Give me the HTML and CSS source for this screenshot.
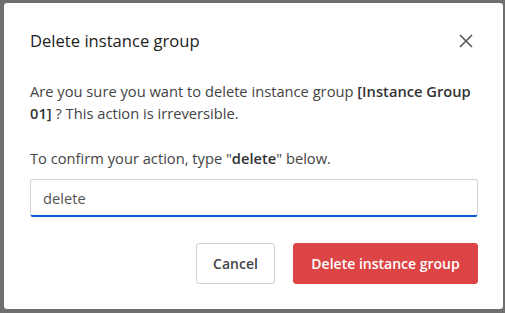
FILE: index.html
```html
<!DOCTYPE html>
<html lang="en">

<head>
  <meta charset="UTF-8">
  <meta name="viewport" content="width=device-width, initial-scale=1.0">
  <title>Delete instance group</title>
  <link rel="stylesheet" href="styles.css">
</head>

<body>
  <div class="modal">
    <div class="modal-header">
      <h2 class="title">Delete instance group</h2>
      <span class="close">
        <svg width="16" height="16" viewBox="0 0 16 16">
          <path d="M2 2 L14 14 M14 2 L2 14" stroke="#555" stroke-width="1.6" fill="none" />
        </svg>
      </span>
    </div>
    <div class="modal-body">
      <p class="warn">Are you sure you want to delete instance group <b>[Instance Group</b> <b>01]</b> ? This action is irreversible.</p>
      <p class="hint">To confirm your action, type "<b>delete</b>" below.</p>
      <input class="confirm" type="text" value="delete">
    </div>
    <div class="modal-footer">
      <button class="btn btn-cancel">Cancel</button>
      <button class="btn btn-danger">Delete instance group</button>
    </div>
  </div>
</body>

</html>
```

FILE: styles.css
```css
* {
  margin: 0;
  padding: 0;
  box-sizing: border-box;
}

body {
  background-color: #6f6f6f;
  padding: 3px 2px 4px 4px;
  font-family: "Open Sans", "Liberation Sans", sans-serif;
  color: #333;
}

.modal {
  width: 499px;
  height: 306px;
  background-color: #fff;
  border-radius: 3px;
  padding: 26px 25px 25px 26px;
  display: flex;
  flex-direction: column;
}

.modal-header {
  display: flex;
  justify-content: space-between;
  align-items: center;
  height: 24px;
}

.title {
  font-size: 16.6px;
  font-weight: 400;
  line-height: 24px;
  color: #222;
}

.close {
  display: flex;
  margin-right: 4px;
}

.modal-body {
  padding-top: 27px;
}

.modal-body p {
  font-size: 14.7px;
  line-height: 22px;
  color: #444;
}

.modal-body b {
  font-weight: 600;
  color: #333;
}

.hint {
  margin-top: 23px;
}

.confirm {
  display: block;
  width: 100%;
  height: 38px;
  margin-top: 10px;
  border: 1px solid #d4d4d4;
  border-bottom: 2px solid #0b5bd3;
  border-radius: 3px;
  padding: 0 12px;
  font-family: inherit;
  font-size: 14.7px;
  color: #555;
  outline: none;
}

.modal-footer {
  display: flex;
  justify-content: flex-end;
  gap: 18px;
  margin-top: 26px;
}

.btn {
  height: 41px;
  border-radius: 3px;
  font-family: inherit;
  font-size: 14px;
  font-weight: 600;
}

.btn-cancel {
  width: 79px;
  background-color: #fff;
  border: 1px solid #cfcfcf;
  color: #444;
}

.btn-danger {
  width: 185px;
  background-color: #dc4446;
  border: 1px solid #dc4446;
  color: #fff;
}
```
